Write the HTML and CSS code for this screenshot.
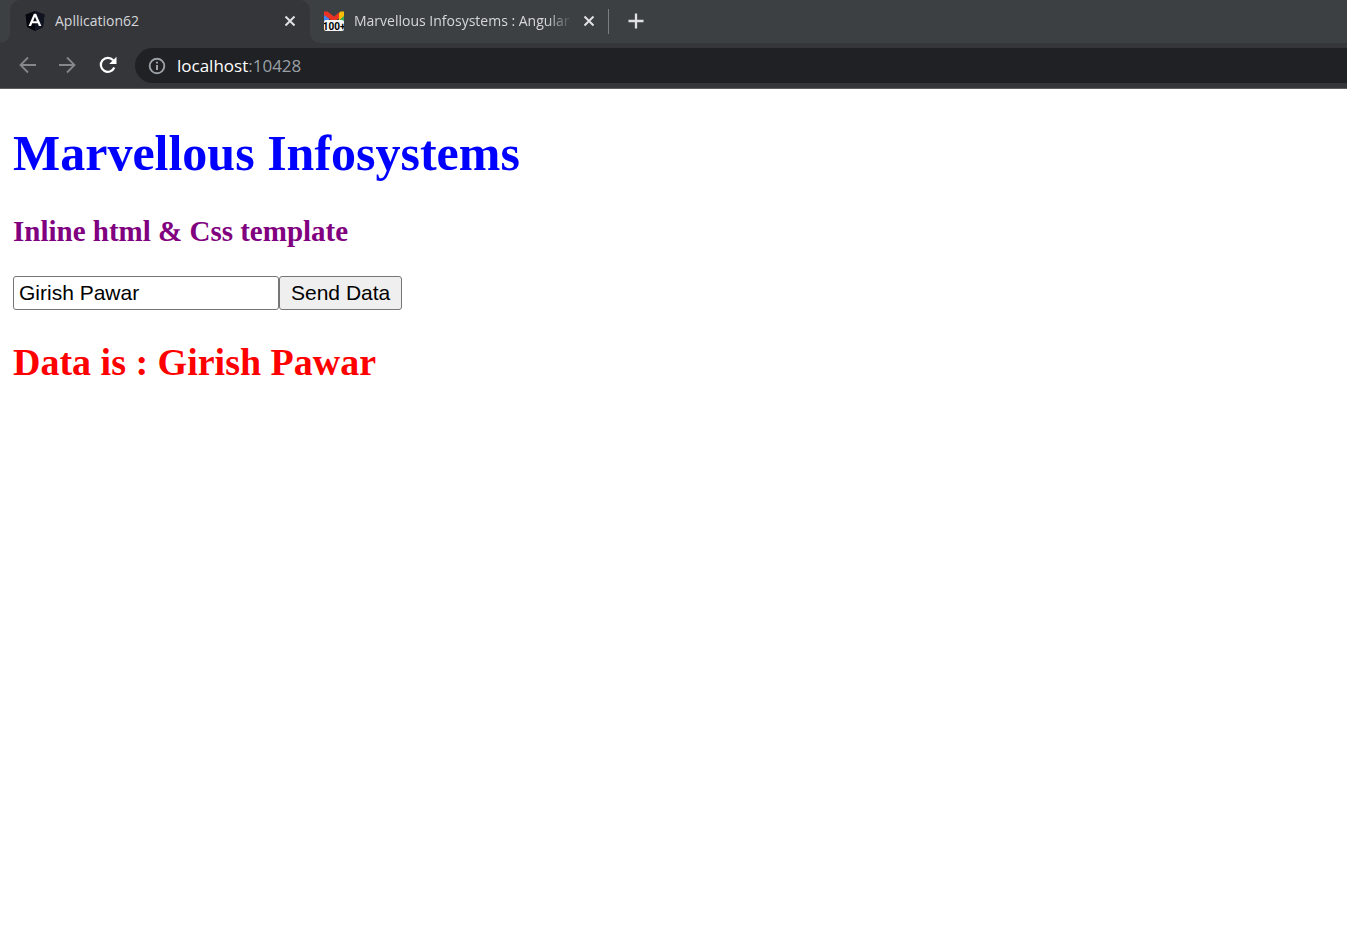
FILE: index.html
```html
<!DOCTYPE html>
<html lang="en">
<head>
<meta charset="utf-8">
<title>Apllication62</title>
<link rel="stylesheet" href="styles.css">
</head>
<body>
<header class="browser">
  <div class="tabs">
    <div class="edge"></div>
    <div class="tab tab-active">
      <svg class="favicon" viewBox="0 0 20 20" aria-hidden="true"><path fill="#05070e" d="M10 0 19.5 3.4 18 16 10 20 2 16 .5 3.4Z"/><path fill="#111522" d="M10 0 19.5 3.4 18 16 10 20Z"/><path fill="#fff" fill-rule="evenodd" d="M8.900 2.800h2.200L16.400 15h-2.500l-1.100-2.700H7.200L6.100 15H3.600ZM10 5.800 8.100 10.300h3.800Z"/></svg>
      <span class="tab-title">Apllication62</span>
      <button class="icon-button" aria-label="Close tab"><svg width="12" height="12" viewBox="0 0 12 12"><path d="m1.500 1.500 9 9m0-9-9 9" stroke="#dfe1e5" stroke-width="2"/></svg></button>
    </div>
    <div class="rest">
      <div class="tab tab-idle">
        <svg class="favicon" viewBox="0 0 20 20" aria-hidden="true"><path fill="#4285f4" d="M0 4h5v8H0z"/><path fill="#34a853" d="M15 4h5v8h-5z"/><path fill="#fbbc04" d="M14 3 16.500.500H20V5l-5 4.500Z"/><path fill="#ea3323" d="M0 .500h3.500L10 5.500 15 1.500V7l-5 4L0 4Z"/><rect y="9" width="20" height="11" rx="2" fill="#f4f4f4"/><text class="badge" x="10" y="19" text-anchor="middle" fill="#000">100+</text></svg>
        <span class="tab-title">Marvellous Infosystems : Angular</span>
        <button class="icon-button" aria-label="Close tab"><svg width="12" height="12" viewBox="0 0 12 12"><path d="m1.500 1.500 9 9m0-9-9 9" stroke="#dfe1e5" stroke-width="2"/></svg></button>
      </div>
      <div class="divider"></div>
      <button class="icon-button new-tab" aria-label="New tab"><svg width="16" height="16" viewBox="0 0 16 16"><path d="M8 .5v15M.5 8h15" stroke="#dfe1e5" stroke-width="2.300"/></svg></button>
    </div>
  </div>
  <div class="toolbar">
    <button class="icon-button" aria-label="Back"><svg width="20" height="20" viewBox="0 0 20 20"><path d="M18 9H3M10 1.500 2.500 9l7.500 7.500" fill="none" stroke="#85878a" stroke-width="1.800"/></svg></button>
    <button class="icon-button" aria-label="Forward"><svg width="20" height="20" viewBox="0 0 20 20"><path d="M1 9h15M9 1.500 16.500 9 9 16.500" fill="none" stroke="#85878a" stroke-width="1.800"/></svg></button>
    <button class="icon-button" aria-label="Reload"><svg width="20" height="20" viewBox="0 0 20 20"><path d="M16.300 11.500A7 7 0 1 1 15.200 4.300" fill="none" stroke="#fff" stroke-width="2.200"/><path fill="#fff" d="M18.500.800v7.300h-7.300Z"/></svg></button>
    <div class="address">
      <svg width="18" height="18" viewBox="0 0 18 18" aria-hidden="true"><circle cx="9" cy="9" r="7.300" fill="none" stroke="#9aa0a6" stroke-width="1.900"/><path d="M9 8v5M9 4.800v1.800" stroke="#9aa0a6" stroke-width="2"/></svg>
      <span class="url"><span class="host">localhost</span>:10428</span>
    </div>
  </div>
</header>
<main class="page">
  <h1 class="title">Marvellous Infosystems</h1>
  <h3 class="subtitle">Inline html &amp; Css template</h3>
  <form class="form"><input class="field" type="text" value="Girish Pawar" aria-label="Name"><button class="send" type="button">Send Data</button></form>
  <h2 class="result">Data is : Girish Pawar</h2>
</main>
</body>
</html>
```
FILE: styles.css
```css
body {
  margin: 0;
  background: #fff;
  font-family: "Liberation Serif", "Times New Roman", serif;
}

.browser {
  background: #35363a;
  border-bottom: 1px solid #5c5d60;
  font-family: "Open Sans", "Noto Sans", sans-serif;
}

.tabs {
  display: flex;
  height: 43px;
  background: #35363a;
}

.edge {
  width: 10px;
  background: #3c4043;
  border-bottom-right-radius: 10px;
}

.tab {
  display: flex;
  align-items: center;
  box-sizing: border-box;
  gap: 10px;
  padding-left: 15px;
}

.tab-active {
  width: 300px;
  padding-right: 14px;
  padding-bottom: 1px;
  background: linear-gradient(#3c4043, #3c4043) top / 100% 10px no-repeat;
  position: relative;
  z-index: 0;
}

.tab-active::before {
  content: "";
  position: absolute;
  inset: 0;
  z-index: -1;
  background: #35363a;
  border-radius: 10px 10px 0 0;
}

.rest {
  display: flex;
  flex: 1;
  align-items: center;
  box-sizing: border-box;
  padding-bottom: 1px;
  background: #3c4043;
  border-bottom-left-radius: 10px;
}

.tab-idle {
  width: 298px;
  padding: 0 13px 0 14px;
}

.favicon {
  flex: none;
  width: 20px;
  height: 20px;
}

.badge {
  font: bold 10px "Liberation Sans Narrow", Roboto, sans-serif;
}

.tab-title {
  flex: 1;
  overflow: hidden;
  padding-bottom: 1px;
  color: #d5d7db;
  font-size: 14px;
  line-height: 20px;
  white-space: nowrap;
}

.tab-idle .tab-title {
  mask-image: linear-gradient(to right, #000 88%, transparent);
}

.icon-button {
  display: flex;
  flex: none;
  padding: 0;
  border: 0;
  background: none;
}

.divider {
  width: 1px;
  height: 25px;
  background: #7b7e81;
}

.new-tab {
  margin-left: 19px;
}

.toolbar {
  display: flex;
  align-items: center;
  gap: 20px;
  padding: 5px 0 5px 18px;
}

.address {
  display: flex;
  flex: 1;
  align-items: center;
  gap: 11px;
  height: 35px;
  margin-left: -3px;
  padding-left: 13px;
  border-radius: 18px 0 0 18px;
  background: #202124;
}

.url {
  color: #9aa0a6;
  font-size: 17px;
  line-height: 24px;
}

.host {
  color: #fff;
}

.page {
  padding: 35px 13px;
}

.title {
  margin: 0 0 33px;
  color: blue;
  font-size: 50px;
  line-height: 58px;
}

.subtitle {
  margin: 0 0 29px;
  color: purple;
  font-size: 29px;
  line-height: 32px;
}

.form {
  display: flex;
  margin-bottom: 30px;
}

.field,
.send {
  box-sizing: border-box;
  height: 34px;
  border: 1px solid #767676;
  border-radius: 3px;
  color: #000;
  font: 21px "Liberation Sans", Arial, sans-serif;
}

.field {
  width: 266px;
  padding: 0 5px;
  background: #fff;
}

.send {
  padding: 0 11px;
  background: #efefef;
}

.result {
  margin: 0;
  color: red;
  font-size: 38px;
  line-height: 44px;
}
```
